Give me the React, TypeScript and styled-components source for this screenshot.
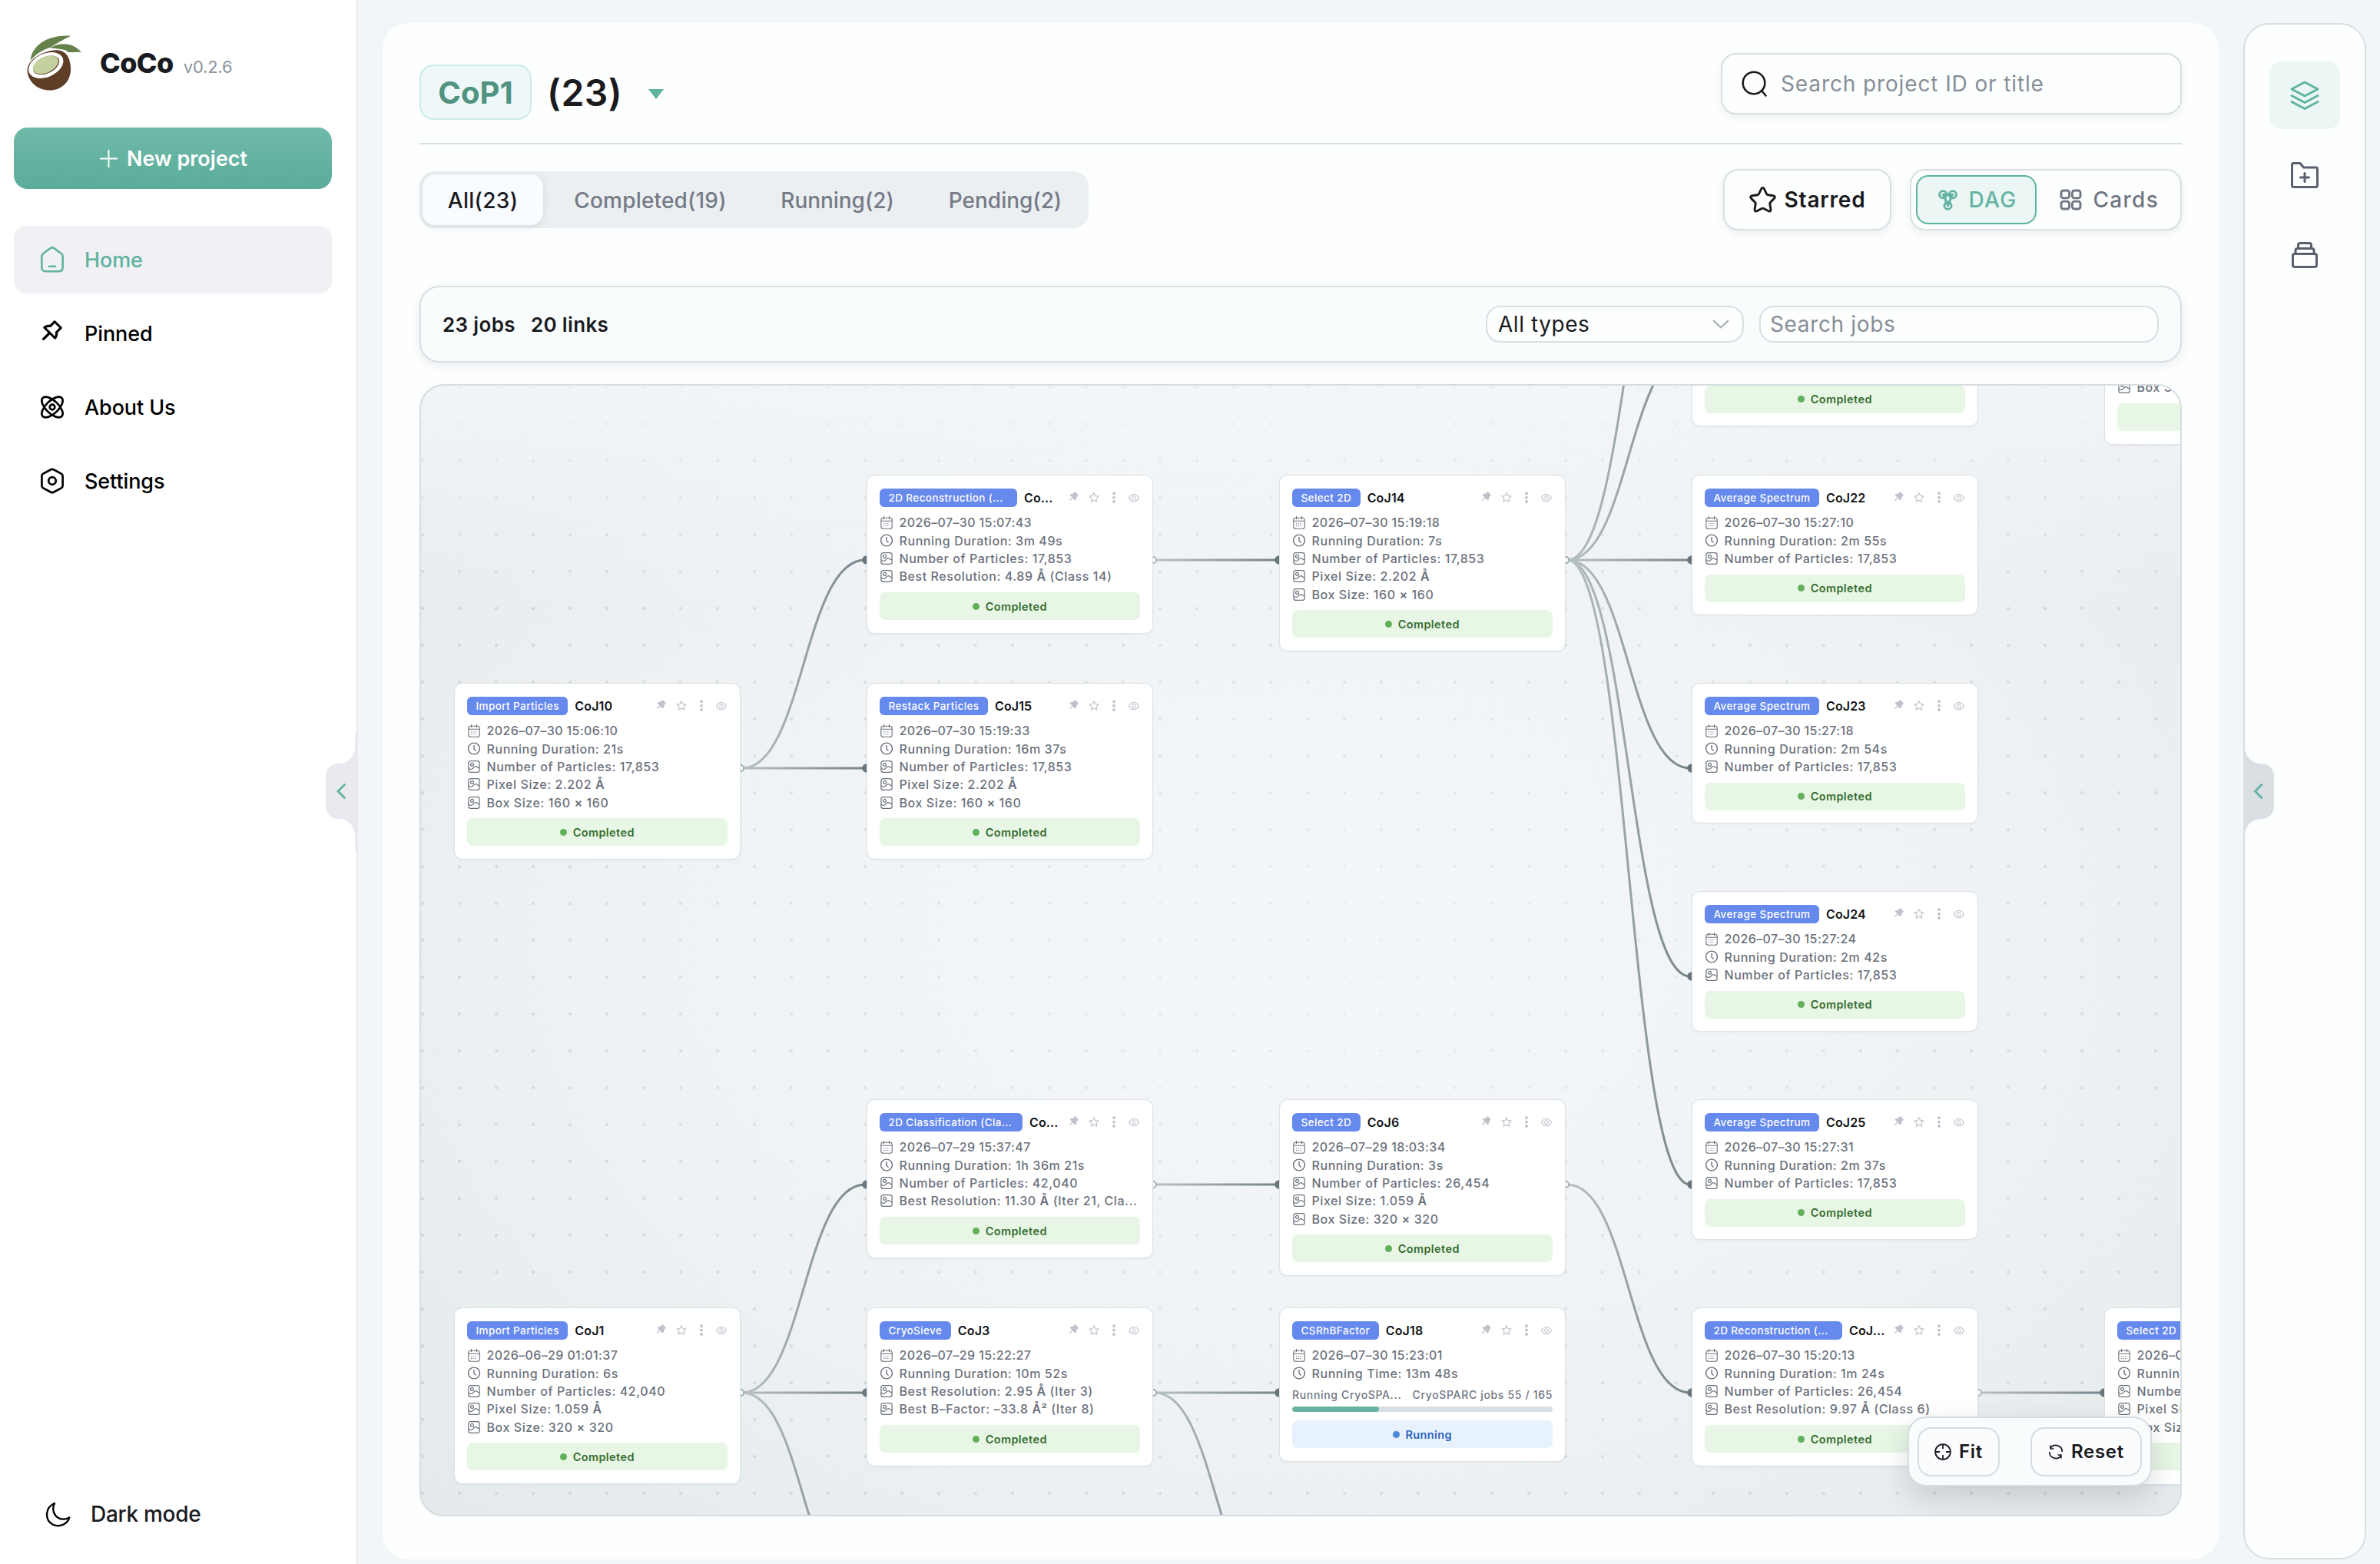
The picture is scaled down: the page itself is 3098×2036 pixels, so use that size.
import React from "react";
import styled, { createGlobalStyle } from "styled-components";
import {
  AiFillPushpin,
  AiOutlineEye,
  AiOutlinePushpin,
  AiOutlineStar,
} from "react-icons/ai";

const GlobalStyle = createGlobalStyle`
  * { box-sizing: border-box; }
  body {
    margin: 0;
    background: #f3f6f9;
    font-family: Inter, "Liberation Sans", sans-serif;
    color: #1a1b1f;
  }
  button, input { font-family: inherit; }
`;

/* ---------- page frame ---------- */

const Page = styled.div`
  display: flex;
  width: 3098px;
  height: 2036px;
  overflow: hidden;
  background: #f3f6f9;
`;

const Sidebar = styled.aside`
  position: relative;
  display: flex;
  flex-direction: column;
  flex: none;
  width: 466px;
  padding: 45px 32px 0 18px;
  background: #fff;
  border-right: 2px solid #e9e9ef;
`;

const Brand = styled.div`
  display: flex;
  align-items: flex-start;
  height: 121px;
  padding-left: 17px;
`;

const BrandText = styled.div`
  display: flex;
  align-items: baseline;
  gap: 13px;
  margin: 15px 0 0 22px;
  line-height: 44px;
`;

const BrandName = styled.span`
  font-size: 36px;
  font-weight: 800;
  letter-spacing: -0.6px;
`;

const Version = styled.span`
  font-size: 22px;
  letter-spacing: -0.2px;
  color: #8b939d;
`;

const NewProject = styled.button`
  display: flex;
  align-items: center;
  justify-content: center;
  gap: 12px;
  height: 80px;
  padding: 0 0 0 2px;
  border: 0;
  border-radius: 18px;
  background: linear-gradient(180deg, #70b9a9, #5aad99);
  color: #fff;
  font-size: 27px;
  font-weight: 600;
`;

const Nav = styled.nav`
  display: flex;
  flex-direction: column;
  gap: 8px;
  margin-top: 48px;
`;

const NavItem = styled.a<{ $active?: boolean }>`
  display: flex;
  align-items: center;
  gap: 25px;
  height: 88px;
  padding-left: 33px;
  border-radius: 16px;
  font-size: 27px;
  font-weight: 500;
  letter-spacing: -0.1px;
  color: ${(p) => (p.$active ? "#5fb39f" : "#000")};
  background: ${(p) => (p.$active ? "#f1f0f5" : "transparent")};
  svg { width: 34px; height: 34px; }
`;

const PinIcon = styled(AiOutlinePushpin)`
  margin-top: -8px;
  stroke: currentColor;
  stroke-width: 26px;
`;

const DarkMode = styled.button`
  display: flex;
  align-items: center;
  gap: 25px;
  margin: auto 0 42px 40px;
  padding: 0;
  border: 0;
  background: none;
  font-size: 28px;
  font-weight: 500;
  letter-spacing: -0.3px;
  color: #1a1b1f;
  height: 46px;
`;

const SideHandle = styled.div<{ $side: "left" | "right" }>`
  position: absolute;
  top: ${(p) => (p.$side === "left" ? 954 : 922)}px;
  ${(p) => (p.$side === "left" ? "right: 0;" : "left: -2px;")}
  width: 40px;
  height: 152px;
  svg { display: block; }
`;

const Main = styled.main`
  display: flex;
  flex-direction: column;
  flex: none;
  width: 2390px;
  height: 2000px;
  margin: 30px 32px 0;
  padding: 0 48px;
  border-radius: 34px;
  background: #fdfefe;
`;

const Rail = styled.aside`
  position: relative;
  display: flex;
  flex-direction: column;
  align-items: center;
  gap: 16px;
  flex: none;
  width: 160px;
  height: 2000px;
  margin-top: 30px;
  padding-top: 48px;
  border: 2px solid #d9dee3;
  border-radius: 34px;
  background: #fdfefe;
`;

const RailButton = styled.button<{ $active?: boolean }>`
  display: grid;
  place-items: center;
  width: 92px;
  height: 88px;
  padding: 0;
  border: 0;
  border-radius: 16px;
  color: ${(p) => (p.$active ? "#5fb39f" : "#59616e")};
  background: ${(p) => (p.$active ? "#ebf6f5" : "transparent")};
`;

/* ---------- header and filters ---------- */

const Header = styled.header`
  display: flex;
  justify-content: space-between;
  align-items: flex-start;
  flex: none;
  height: 158px;
  border-bottom: 2px solid #d9dfe3;
`;

const Title = styled.div`
  display: flex;
  align-items: center;
  height: 72px;
  margin-top: 54px;
`;

const ProjectBadge = styled.span`
  display: flex;
  align-items: center;
  justify-content: center;
  width: 146px;
  height: 72px;
  border: 2px solid #cdebe8;
  border-radius: 18px;
  background: #eff8f8;
  color: #4f9380;
  font-size: 40px;
  font-weight: 700;
`;

const ProjectCount = styled.span`
  margin-left: 20px;
  font-size: 48px;
  font-weight: 600;
  letter-spacing: 0.5px;
`;

const Caret = styled.span`
  margin: 4px 0 0 34px;
  border: 10px solid transparent;
  border-top: 13px solid #5fb39f;
  border-bottom: 0;
`;

const SearchBox = styled.label`
  display: flex;
  align-items: center;
  gap: 18px;
  width: 600px;
  height: 80px;
  margin-top: 39px;
  padding-left: 25px;
  border: 2px solid #d9dfe4;
  border-radius: 20px;
  background: #fdfefe;
  box-shadow: 0 4px 12px rgba(20, 30, 40, 0.06);
`;

const Placeholder = styled.span<{ $spacing?: number }>`
  font-size: 28px;
  letter-spacing: ${(p) => p.$spacing ?? 0.88}px;
  color: #868e98;
`;

const Filters = styled.div`
  display: flex;
  justify-content: space-between;
  align-items: center;
  flex: none;
  height: 80px;
  margin-top: 32px;
`;

const Tabs = styled.div`
  display: flex;
  gap: 8px;
  height: 74px;
  padding: 4px;
  border-radius: 20px;
  background: #ebeff2;
`;

const Tab = styled.button<{ $active?: boolean; $width: number; $spacing: number }>`
  width: ${(p) => p.$width}px;
  padding: 2px 0 0 ${(p) => (p.$active ? 0 : 2)}px;
  border: 0;
  border-radius: 16px;
  font-size: 28px;
  font-weight: 500;
  letter-spacing: ${(p) => p.$spacing}px;
  white-space: nowrap;
  color: ${(p) => (p.$active ? "#1a1b1f" : "#757b86")};
  background: ${(p) => (p.$active ? "#f9fcfe" : "transparent")};
  box-shadow: ${(p) => (p.$active ? "0 2px 10px rgba(20, 30, 40, 0.1)" : "none")};
`;

const FilterActions = styled.div`
  display: flex;
  gap: 24px;
`;

const StarredButton = styled.button`
  display: flex;
  align-items: center;
  justify-content: center;
  gap: 11px;
  width: 219px;
  height: 80px;
  padding: 0;
  border: 2px solid #d9dfe4;
  border-radius: 20px;
  background: #fdfefe;
  box-shadow: 0 4px 12px rgba(20, 30, 40, 0.07);
  font-size: 28px;
  font-weight: 600;
  letter-spacing: 0.8px;
  color: #1a1b1f;
`;

const ViewToggle = styled.div`
  display: flex;
  align-items: center;
  width: 354px;
  height: 80px;
  padding: 0 6px;
  border: 2px solid #d9dfe4;
  border-radius: 20px;
  background: #fdfefe;
  box-shadow: 0 4px 12px rgba(20, 30, 40, 0.07);
`;

const ViewOption = styled.button<{ $active?: boolean }>`
  display: flex;
  align-items: center;
  justify-content: center;
  flex: none;
  gap: ${(p) => (p.$active ? 15 : 14.5)}px;
  width: ${(p) => (p.$active ? 157 : 181)}px;
  height: 64px;
  padding: 0 0 0 ${(p) => (p.$active ? 3 : 8)}px;
  border: 2px solid ${(p) => (p.$active ? "#5cb3a0" : "transparent")};
  border-radius: 16px;
  background: ${(p) => (p.$active ? "#ebf6f5" : "transparent")};
  color: ${(p) => (p.$active ? "#65b3a2" : "#6f7682")};
  font-size: 28px;
  font-weight: 500;
  letter-spacing: 1.3px;
`;

const JobBar = styled.div`
  display: flex;
  align-items: center;
  flex: none;
  height: 100px;
  margin-top: 72px;
  padding: 0 28px;
  border: 2px solid #d9dfe4;
  border-radius: 26px;
  background: #f9fcfd;
  box-shadow: 0 4px 14px rgba(20, 30, 40, 0.08);
`;

const JobStat = styled.span`
  margin-right: 20px;
  font-size: 26px;
  font-weight: 600;
  letter-spacing: 0.35px;
`;

const Field = styled.div<{ $width: number }>`
  display: flex;
  align-items: center;
  justify-content: space-between;
  width: ${(p) => p.$width}px;
  height: 48px;
  margin-left: 20px;
  padding: 0 17px 0 12px;
  border: 2px solid #d9dfe4;
  border-radius: 19px;
  background: #fdfefe;
  &:first-of-type { margin-left: auto; }
`;

const FieldValue = styled.span`
  margin-left: 2px;
  font-size: 28px;
  letter-spacing: 0.55px;
`;

/* ---------- graph ---------- */

const Canvas = styled.section`
  position: relative;
  flex: none;
  height: 1474px;
  margin-top: 28px;
  overflow: hidden;
  border: 2px solid #d5dde0;
  border-radius: 32px;
  background-image:
    linear-gradient(180deg, rgba(246, 249, 251, 0.7), rgba(246, 249, 251, 0) 20%),
    radial-gradient(ellipse 60% 62% at 52% 52%, rgba(243, 247, 249, 0.75), rgba(243, 247, 249, 0)),
    radial-gradient(circle at 2px 2px, #d0d6da 1.7px, rgba(208, 214, 218, 0) 2.5px),
    radial-gradient(ellipse 72% 78% at 50% 48%, #f2f6f8 0%, #ecf0f3 55%, #e4e9ec 100%);
  background-size: auto, auto, 48px 48px, auto;
`;

const Edges = styled.svg`
  position: absolute;
  inset: 0;
`;

const NodeCard = styled.article`
  position: absolute;
  width: 373px;
  padding: 16.5px 16px;
  border: 1.5px solid #dde2e6;
  border-radius: 11px;
  background: #fff;
  box-shadow: 0 1px 3px rgba(40, 50, 60, 0.05);
`;

const NodeHead = styled.div`
  display: flex;
  align-items: center;
  height: 24px;
`;

const TypeBadge = styled.span<{ $width?: number }>`
  height: 24px;
  width: ${(p) => (p.$width ? p.$width + "px" : "auto")};
  padding: 0 11.5px;
  border-radius: 6px;
  background: #6689ee;
  color: #fff;
  font-size: 13.5px;
  font-weight: 450;
  line-height: 24px;
  letter-spacing: 0.4px;
  white-space: nowrap;
`;

const NodeName = styled.span`
  margin-left: 9px;
  font-size: 16px;
  font-weight: 600;
  letter-spacing: 0.15px;
  line-height: 24px;
  color: #111216;
`;

const NodeActions = styled.div`
  display: flex;
  align-items: center;
  gap: 10px;
  margin-left: auto;
  color: #bfc1cb;
  svg { width: 16px; height: 16px; }
  svg:first-child { margin-top: -4px; }
`;

const Facts = styled.div`
  display: flex;
  flex-direction: column;
  flex: none;
  margin: 9px 0;
`;

const Fact = styled.div<{ $date?: boolean }>`
  display: flex;
  align-items: center;
  gap: 8.5px;
  height: 23.4px;
  padding-left: 1px;
  font-size: 16px;
  font-weight: 450;
  letter-spacing: ${(p) => (p.$date ? 0.38 : 0.57)}px;
  white-space: nowrap;
  color: #6b717c;
`;

const Glyph = styled.span`
  font-weight: 600;
`;

const Progress = styled.div`
  margin: -3px 0 11px;
`;

const ProgressText = styled.div`
  display: flex;
  justify-content: space-between;
  height: 22px;
  margin-bottom: 4px;
  font-size: 14px;
  font-weight: 500;
  line-height: 22px;
  letter-spacing: 0.66px;
  white-space: nowrap;
  color: #6f7682;
`;

const ProgressTrack = styled.div`
  height: 7px;
  border-radius: 4px;
  overflow: hidden;
  background: #d9dee2;
`;

const ProgressFill = styled.div`
  height: 100%;
  border-radius: 4px;
  background: #65b3a2;
`;

const Status = styled.div<{ $running?: boolean }>`
  display: flex;
  align-items: center;
  justify-content: center;
  flex: none;
  gap: 7.5px;
  height: 36px;
  border-radius: 7px;
  font-size: 14.5px;
  font-weight: 600;
  letter-spacing: 0.4px;
  background: ${(p) => (p.$running ? "#e7f2fe" : "#e8f6e5")};
  color: ${(p) => (p.$running ? "#2b62bd" : "#356d30")};
  &::before {
    content: "";
    width: 9px;
    height: 9px;
    border-radius: 50%;
    background: ${(p) => (p.$running ? "#4c86dc" : "#62b05c")};
  }
`;

const Controls = styled.div`
  position: absolute;
  right: 37px;
  bottom: 37px;
  display: flex;
  align-items: center;
  gap: 40px;
  height: 91px;
  padding: 0 11px;
  border: 2px solid #d5dde1;
  border-radius: 24px;
  background: #f9fcfd;
  box-shadow: 0 14px 36px rgba(30, 40, 50, 0.16);
`;

const ControlButton = styled.button<{ $width: number }>`
  display: flex;
  align-items: center;
  justify-content: center;
  gap: 10px;
  width: ${(p) => p.$width}px;
  height: 64px;
  padding: 0;
  border: 2px solid #d5dde1;
  border-radius: 18px;
  background: #fafcfe;
  font-size: 24px;
  font-weight: 600;
  letter-spacing: 0.7px;
  color: #1a1b1f;
`;

/* ---------- icons ---------- */

const Logo = () => (
  <svg width="73" height="74" viewBox="0 0 73 74">
    <path d="M4.5 34C7 12 30 0 57 1.8C47 7 38 12 31 16.5C20 20 11 26 4.5 34Z" fill="#67814b" />
    <path d="M30 17.5C44 9 61 11 71 23.2C65 22 60 23.4 54 23C50 19 42 18.5 30 17.5Z" fill="#67814b" />
    <path d="M1 50C-2 38 12 25 31 21C46 18 56 24 57 43C58 61 45 72.500 30 72.500C14 72.500 3 62 1 50Z" fill="#5f3e27" />
    <ellipse cx="24.800" cy="40" rx="23.800" ry="15.200" transform="rotate(-24 24.800 40)" fill="#fff" />
    <ellipse cx="25" cy="39.800" rx="18.200" ry="10.600" transform="rotate(-25 25 39.800)" fill="#5f3e27" />
    <ellipse cx="24.400" cy="39.200" rx="17.600" ry="10.400" transform="rotate(-25 24.400 39.200)" fill="#c4d09e" />
  </svg>
);

const PlusIcon = () => (
  <svg width="23" height="23" viewBox="0 0 23 23" stroke="currentColor" strokeWidth="1.900">
    <path d="M11.500 0V23M0 11.500H23" />
  </svg>
);

const HomeIcon = () => (
  <svg viewBox="0 0 34 34" fill="none" stroke="currentColor" strokeWidth="2.600" strokeLinecap="round">
    <path d="M3.300 13.500Q3.300 11.200 5.300 9.800L14.600 2.900Q17 1.300 19.400 2.900L28.700 9.800Q30.700 11.200 30.700 13.500V27.500Q30.700 33 25.200 33H8.800Q3.300 33 3.300 27.500Z" transform="translate(0 -.8)" />
    <path d="M13 25.800H21" />
  </svg>
);

const AtomIcon = () => (
  <svg viewBox="0 0 34 34" fill="none" stroke="currentColor" strokeWidth="2.700">
    <ellipse cx="17" cy="17" rx="17.200" ry="8.200" transform="rotate(44 17 17)" />
    <ellipse cx="17" cy="17" rx="17.200" ry="8.200" transform="rotate(-44 17 17)" />
    <circle cx="17" cy="17" r="3.300" />
  </svg>
);

const SettingsIcon = () => (
  <svg viewBox="0 0 34 34" fill="none" stroke="currentColor" strokeWidth="2.700" strokeLinejoin="round">
    <path d="M15.200 2.300Q17 1.300 18.800 2.300L28.700 7.600Q30.600 8.700 30.600 10.800V23.200Q30.600 25.300 28.700 26.400L18.800 31.700Q17 32.700 15.200 31.700L5.300 26.400Q3.400 25.300 3.400 23.200V10.800Q3.400 8.700 5.300 7.600Z" />
    <circle cx="17" cy="17" r="4.800" />
  </svg>
);

const MoonIcon = () => (
  <svg width="35" height="35" viewBox="0 0 35 35" fill="none" stroke="#000" strokeWidth="2.400" strokeLinejoin="round">
    <path d="M13 3C1 8-.5 24 10.500 30.500C19.500 35 30 30 32.300 21.500C26 25.200 18 24 14 18.500C10.500 13.500 10.500 8 13 3Z" />
  </svg>
);

const SearchIcon = () => (
  <svg width="33" height="34" viewBox="0 0 33 34" fill="none" stroke="#1a1b1f" strokeWidth="2.600">
    <circle cx="16" cy="16" r="14.300" />
    <path d="M26 26L31.500 32.500" strokeLinecap="round" />
  </svg>
);

const StarIcon = () => (
  <svg width="35" height="34" viewBox="0 0 35 34" fill="none" stroke="currentColor" strokeWidth="2.900" strokeLinejoin="round">
    <path d="M15.400 3.300Q17.500-.5 19.600 3.300L22.500 9.300Q23.100 10.500 24.500 10.700L31 11.700Q35 12.600 32.200 15.600L27.600 20.200Q26.600 21.200 26.800 22.600L27.900 29Q28.300 33.200 24.500 31.500L18.900 28.500Q17.500 27.800 16.100 28.500L10.500 31.500Q6.700 33.200 7.100 29L8.200 22.600Q8.400 21.200 7.400 20.200L2.800 15.600Q0 12.600 4 11.700L10.500 10.700Q11.900 10.500 12.500 9.300Z" />
  </svg>
);

const DagIcon = () => (
  <svg width="25" height="27" viewBox="0 0 25 27" fill="none" stroke="currentColor" strokeWidth="2.800">
    <circle cx="6.200" cy="6.300" r="4.600" />
    <circle cx="18.800" cy="6.300" r="4.600" />
    <circle cx="12.500" cy="20.700" r="4.600" />
    <path d="M6.200 6.300H18.800M6.700 6.300L12.500 20.700L18.300 6.300" strokeWidth="3.200" strokeLinecap="round" strokeLinejoin="round" />
  </svg>
);

const GridIcon = () => (
  <svg width="29" height="28" viewBox="0 0 29 28" fill="none" stroke="currentColor" strokeWidth="2.900">
    <rect x="2" y="2" width="10.600" height="9.900" rx="3" />
    <rect x="16.400" y="2" width="10.600" height="9.900" rx="3" />
    <rect x="2" y="16.100" width="10.600" height="9.900" rx="3" />
    <rect x="16.400" y="16.100" width="10.600" height="9.900" rx="3" />
  </svg>
);

const ChevronDown = () => (
  <svg width="22" height="12" viewBox="0 0 22 12" fill="none" stroke="#a3a9b0" strokeWidth="1.800">
    <path d="M1 1L11 10.500L21 1" />
  </svg>
);

const LayersIcon = () => (
  <svg width="40" height="40" viewBox="0 0 40 40" fill="none" stroke="currentColor" strokeWidth="2.900" strokeLinejoin="round" strokeLinecap="round">
    <path d="M20 3L37 12L20 21L3 12Z" />
    <path d="M3 20.500L20 29.500L37 20.500M3 28.500L20 37.500L37 28.500" />
  </svg>
);

const FolderPlusIcon = () => (
  <svg width="40" height="40" viewBox="0 0 40 40" fill="none" stroke="currentColor" strokeWidth="3" strokeLinejoin="round" strokeLinecap="round">
    <path d="M3.500 6.500Q3.500 4.500 5.500 4.500H14L18.500 10H34.500Q36.500 10 36.500 12V33Q36.500 35.500 34.500 35.500H5.500Q3.500 35.500 3.500 33Z" />
    <path d="M20 17.500V28.500M14.500 23H25.500" />
  </svg>
);

const StackIcon = () => (
  <svg width="40" height="40" viewBox="0 0 40 40" fill="none" stroke="currentColor" strokeWidth="3" strokeLinejoin="round">
    <rect x="4.500" y="18.500" width="31" height="17" rx="2.500" />
    <path d="M8 18V14Q8 11.500 10.500 11.500H29.500Q32 11.500 32 14V18M11.500 11V7Q11.500 4.500 14 4.500H26Q28.500 4.500 28.500 7V11" />
  </svg>
);

const FitIcon = () => (
  <svg width="22" height="22" viewBox="0 0 22 22" fill="none" stroke="currentColor" strokeWidth="1.800">
    <circle cx="11" cy="11" r="9.900" />
    <path d="M11 1V7M11 15V21M1 11H7M15 11H21" />
  </svg>
);

const ResetIcon = () => (
  <svg width="20" height="20" viewBox="0 0 20 20" fill="none" stroke="currentColor" strokeWidth="1.700">
    <path d="M3 5.500A8.200 8.200 0 0 1 18.200 10M17 14.500A8.200 8.200 0 0 1 1.800 10" />
    <path d="M3.200 1.500V6H7.500M16.800 18.500V14H12.500" />
  </svg>
);

const CalendarIcon = () => (
  <svg width="16" height="17" viewBox="0 0 16 17" fill="none" stroke="currentColor" strokeWidth="1.100">
    <rect x=".8" y="2.200" width="14.400" height="14" rx="2.800" />
    <path d="M.8 6.300H15.200M4.500 0V4M11.500 0V4" />
    <path d="M4 9.800H12M4 12.500H12" strokeDasharray="1.200 1.400" />
  </svg>
);

const ClockIcon = () => (
  <svg width="16" height="17" viewBox="0 0 16 17" fill="none" stroke="currentColor" strokeWidth="1.400">
    <circle cx="8" cy="8.500" r="7.400" />
    <path d="M8 4V9L10.500 11.500" />
  </svg>
);

const ImageIcon = () => (
  <svg width="16" height="16" viewBox="0 0 16 16" fill="none" stroke="currentColor" strokeWidth="1.200">
    <rect x=".9" y=".7" width="14.200" height="14.600" rx="2.600" />
    <circle cx="5.500" cy="5.300" r="2" />
    <path d="M1 9.500Q3 12.300 5 11.300T8.500 8.200Q10.500 6.800 12 8.300T15 9.600" />
  </svg>
);

const MoreIcon = () => (
  <svg viewBox="0 0 16 16" fill="currentColor">
    <circle cx="8" cy="2.200" r="1.900" />
    <circle cx="8" cy="7.600" r="1.900" />
    <circle cx="8" cy="13" r="1.900" />
  </svg>
);

const HandleShape = ({ mirrored }: { mirrored?: boolean }) => (
  <svg width="40" height="152" viewBox="0 0 40 152">
    <path
      d="M40 0H38V18C38 30 29 40 17 40H16C7 40 0 47 0 56V96C0 105 7 112 16 112H17C29 112 38 122 38 134V152H40Z"
      transform={mirrored ? "matrix(-1 0 0 1 40 0)" : undefined}
      fill={mirrored ? "#d9dfe3" : "#e9e9ef"}
    />
    <path
      d={mirrored ? "M24 67.500L15.500 76L24 84.500" : "M24.500 67.500L16 76L24.500 84.500"}
      fill="none"
      stroke="#5fb39f"
      strokeWidth="2.800"
      strokeLinecap="round"
    />
  </svg>
);

/* ---------- data ---------- */

type Job = {
  name: string;
  type: string;
  badgeWidth?: number;
  col: number;
  row: number;
  date: string;
  duration: string;
  facts?: string[];
  progress?: { label: string; done: number; total: number };
};

const particles = (n: string) => `Number of Particles: ${n}`;

const jobs: Job[] = [
  { name: "Co...", type: "2D Reconstruction (...", badgeWidth: 179, col: 1, row: 0, date: "2026–07–30 15:07:43", duration: "Running Duration: 3m 49s", facts: [particles("17,853"), "Best Resolution: 4.89 Å (Class 14)"] },
  { name: "CoJ14", type: "Select 2D", col: 2, row: 0, date: "2026–07–30 15:19:18", duration: "Running Duration: 7s", facts: [particles("17,853"), "Pixel Size: 2.202 Å", "Box Size: 160 × 160"] },
  { name: "CoJ22", type: "Average Spectrum", col: 3, row: 0, date: "2026–07–30 15:27:10", duration: "Running Duration: 2m 55s", facts: [particles("17,853")] },
  { name: "CoJ10", type: "Import Particles", col: 0, row: 1, date: "2026–07–30 15:06:10", duration: "Running Duration: 21s", facts: [particles("17,853"), "Pixel Size: 2.202 Å", "Box Size: 160 × 160"] },
  { name: "CoJ15", type: "Restack Particles", col: 1, row: 1, date: "2026–07–30 15:19:33", duration: "Running Duration: 16m 37s", facts: [particles("17,853"), "Pixel Size: 2.202 Å", "Box Size: 160 × 160"] },
  { name: "CoJ23", type: "Average Spectrum", col: 3, row: 1, date: "2026–07–30 15:27:18", duration: "Running Duration: 2m 54s", facts: [particles("17,853")] },
  { name: "CoJ24", type: "Average Spectrum", col: 3, row: 2, date: "2026–07–30 15:27:24", duration: "Running Duration: 2m 42s", facts: [particles("17,853")] },
  { name: "Co...", type: "2D Classification (Cla...", badgeWidth: 186, col: 1, row: 3, date: "2026–07–29 15:37:47", duration: "Running Duration: 1h 36m 21s", facts: [particles("42,040"), "Best Resolution: 11.30 Å (Iter 21, Cla..."] },
  { name: "CoJ6", type: "Select 2D", col: 2, row: 3, date: "2026–07–29 18:03:34", duration: "Running Duration: 3s", facts: [particles("26,454"), "Pixel Size: 1.059 Å", "Box Size: 320 × 320"] },
  { name: "CoJ25", type: "Average Spectrum", col: 3, row: 3, date: "2026–07–30 15:27:31", duration: "Running Duration: 2m 37s", facts: [particles("17,853")] },
  { name: "CoJ1", type: "Import Particles", col: 0, row: 4, date: "2026–06–29 01:01:37", duration: "Running Duration: 6s", facts: [particles("42,040"), "Pixel Size: 1.059 Å", "Box Size: 320 × 320"] },
  { name: "CoJ3", type: "CryoSieve", col: 1, row: 4, date: "2026–07–29 15:22:27", duration: "Running Duration: 10m 52s", facts: ["Best Resolution: 2.95 Å (Iter 3)", "Best B–Factor: –33.8 Å² (Iter 8)"] },
  { name: "CoJ18", type: "CSRhBFactor", col: 2, row: 4, date: "2026–07–30 15:23:01", duration: "Running Time: 13m 48s", progress: { label: "Running CryoSPA...", done: 55, total: 165 } },
  { name: "CoJ...", type: "2D Reconstruction (...", badgeWidth: 179, col: 3, row: 4, date: "2026–07–30 15:20:13", duration: "Running Duration: 1m 24s", facts: [particles("26,454"), "Best Resolution: 9.97 Å (Class 6)"] },
];

type Point = [col: number, row: number];
const links: [Point, Point][] = [
  [[0, 1], [1, 0]],
  [[0, 1], [1, 1]],
  [[1, 0], [2, 0]],
  [[2, 0], [3, -2]],
  [[2, 0], [3, -1]],
  [[2, 0], [3, 0]],
  [[2, 0], [3, 1]],
  [[2, 0], [3, 2]],
  [[2, 0], [3, 3]],
  [[1, 3], [2, 3]],
  [[2, 3], [3, 4]],
  [[0, 4], [1, 3]],
  [[0, 4], [1, 4]],
  [[0, 4], [1, 5]],
  [[1, 4], [2, 4]],
  [[1, 4], [2, 5]],
  [[3, 4], [4, 4]],
];

const NODE_WIDTH = 373;
const nodeX = (col: number) => 43 + col * 537;
const nodeY = (row: number) => 116.5 + row * 271;
const portY = (row: number) => nodeY(row) + 110.5;

/* ---------- components ---------- */

const FactText = ({ children }: { children: string }) => (
  <span>
    {children.split(/(Å²?|×)/).map((part, i) => (i % 2 ? <Glyph key={i}>{part}</Glyph> : part))}
  </span>
);

const JobNode = ({ job }: { job: Job }) => (
  <NodeCard style={{ left: nodeX(job.col), top: nodeY(job.row) - 0.5 }}>
    <NodeHead>
      <TypeBadge $width={job.badgeWidth}>{job.type}</TypeBadge>
      <NodeName>{job.name}</NodeName>
      <NodeActions>
        <AiFillPushpin />
        <AiOutlineStar />
        <MoreIcon />
        <AiOutlineEye />
      </NodeActions>
    </NodeHead>
    <Facts>
      <Fact $date><CalendarIcon /><FactText>{job.date}</FactText></Fact>
      <Fact><ClockIcon /><FactText>{job.duration}</FactText></Fact>
      {job.facts?.map((f) => (
        <Fact key={f}><ImageIcon /><FactText>{f}</FactText></Fact>
      ))}
    </Facts>
    {job.progress && (
      <Progress>
        <ProgressText>
          <span>{job.progress.label}</span>
          <span>CryoSPARC jobs {job.progress.done} / {job.progress.total}</span>
        </ProgressText>
        <ProgressTrack>
          <ProgressFill style={{ width: `${(job.progress.done / job.progress.total) * 100}%` }} />
        </ProgressTrack>
      </Progress>
    )}
    <Status $running={!!job.progress}>{job.progress ? "Running" : "Completed"}</Status>
  </NodeCard>
);

/* Nodes scrolled partly past the top edge: only their lower part is rendered. */
const TopNode = styled(NodeCard)<{ $col: number; $bottom: number }>`
  display: flex;
  flex-direction: column;
  justify-content: flex-end;
  left: ${(p) => nodeX(p.$col)}px;
  top: -20px;
  height: ${(p) => p.$bottom + 20}px;
`;

/* Node that runs past the right edge of the canvas. */
const EdgeNode = styled(NodeCard)`
  left: ${nodeX(4)}px;
  top: ${nodeY(4) - 0.5}px;
  height: 231px;
`;

const EdgeStatus = styled(Status)`
  &::before { display: none; }
`;

const LinkLayer = () => (
  <Edges width="2290" height="1470">
    <defs>
      {[0, 1, 2, 3].map((c) => (
        <linearGradient key={c} id={`link${c}`} gradientUnits="userSpaceOnUse" x1={nodeX(c) + NODE_WIDTH} x2={nodeX(c + 1)} y1="0" y2="0">
          <stop offset="0" stopColor="#b9c3c5" />
          <stop offset="1" stopColor="#75828a" />
        </linearGradient>
      ))}
    </defs>
    {links.map(([from, to], i) => {
      const x1 = nodeX(from[0]) + NODE_WIDTH + 2;
      const x2 = nodeX(to[0]) - 2;
      const y1 = portY(from[1]);
      const y2 = portY(to[1]);
      const mid = (x1 + x2) / 2;
      return (
        <path key={i} d={`M${x1} ${y1}C${mid} ${y1} ${mid} ${y2} ${x2} ${y2}`} fill="none" stroke={`url(#link${from[0]})`} strokeWidth="3" />
      );
    })}
    {links.map(([from, to], i) => (
      <g key={i}>
        <circle cx={nodeX(from[0]) + NODE_WIDTH} cy={portY(from[1])} r="4" fill="#fff" stroke="#a9b4b8" strokeWidth="2" />
        <circle cx={nodeX(to[0])} cy={portY(to[1])} r="5.800" fill="#6a767c" />
      </g>
    ))}
  </Edges>
);

export default function App() {
  return (
    <>
      <GlobalStyle />
      <Page>
        <Sidebar>
          <Brand>
            <Logo />
            <BrandText>
              <BrandName>CoCo</BrandName>
              <Version>v0.2.6</Version>
            </BrandText>
          </Brand>
          <NewProject><PlusIcon />New project</NewProject>
          <Nav>
            <NavItem $active><HomeIcon />Home</NavItem>
            <NavItem><PinIcon />Pinned</NavItem>
            <NavItem><AtomIcon />About Us</NavItem>
            <NavItem><SettingsIcon />Settings</NavItem>
          </Nav>
          <DarkMode><MoonIcon />Dark mode</DarkMode>
          <SideHandle $side="left"><HandleShape /></SideHandle>
        </Sidebar>

        <Main>
          <Header>
            <Title>
              <ProjectBadge>CoP1</ProjectBadge>
              <ProjectCount>(23)</ProjectCount>
              <Caret />
            </Title>
            <SearchBox>
              <SearchIcon />
              <Placeholder>Search project ID or title</Placeholder>
            </SearchBox>
          </Header>

          <Filters>
            <Tabs>
              <Tab $active $width={157} $spacing={0.3}>All(23)</Tab>
              <Tab $width={261} $spacing={0.18}>Completed(19)</Tab>
              <Tab $width={210} $spacing={-0.05}>Running(2)</Tab>
              <Tab $width={211} $spacing={-0.02}>Pending(2)</Tab>
            </Tabs>
            <FilterActions>
              <StarredButton><StarIcon />Starred</StarredButton>
              <ViewToggle>
                <ViewOption $active><DagIcon />DAG</ViewOption>
                <ViewOption><GridIcon />Cards</ViewOption>
              </ViewToggle>
            </FilterActions>
          </Filters>

          <JobBar>
            <JobStat>23 jobs</JobStat>
            <JobStat>20 links</JobStat>
            <Field $width={336}>
              <FieldValue>All types</FieldValue>
              <ChevronDown />
            </Field>
            <Field $width={520}>
              <Placeholder $spacing={0.65}>Search jobs</Placeholder>
            </Field>
          </JobBar>

          <Canvas>
            <LinkLayer />
            <TopNode $col={3} $bottom={53}>
              <Status>Completed</Status>
            </TopNode>
            <TopNode $col={4} $bottom={76.5}>
              <Facts>
                <Fact><ImageIcon /><FactText>Box Size</FactText></Fact>
              </Facts>
              <EdgeStatus />
            </TopNode>
            {jobs.map((job) => (
              <JobNode key={`${job.col}:${job.row}`} job={job} />
            ))}
            <EdgeNode>
              <NodeHead><TypeBadge>Select 2D</TypeBadge></NodeHead>
              <Facts>
                <Fact $date><CalendarIcon /><FactText>2026–07</FactText></Fact>
                <Fact><ClockIcon /><FactText>Running</FactText></Fact>
                <Fact><ImageIcon /><FactText>Number</FactText></Fact>
                <Fact><ImageIcon /><FactText>Pixel Size</FactText></Fact>
                <Fact><ImageIcon /><FactText>Box Size</FactText></Fact>
              </Facts>
              <EdgeStatus />
            </EdgeNode>
            <Controls>
              <ControlButton $width={107}><FitIcon />Fit</ControlButton>
              <ControlButton $width={145}><ResetIcon />Reset</ControlButton>
            </Controls>
          </Canvas>
        </Main>

        <Rail>
          <RailButton $active><LayersIcon /></RailButton>
          <RailButton><FolderPlusIcon /></RailButton>
          <RailButton><StackIcon /></RailButton>
          <SideHandle $side="right"><HandleShape mirrored /></SideHandle>
        </Rail>
      </Page>
    </>
  );
}
